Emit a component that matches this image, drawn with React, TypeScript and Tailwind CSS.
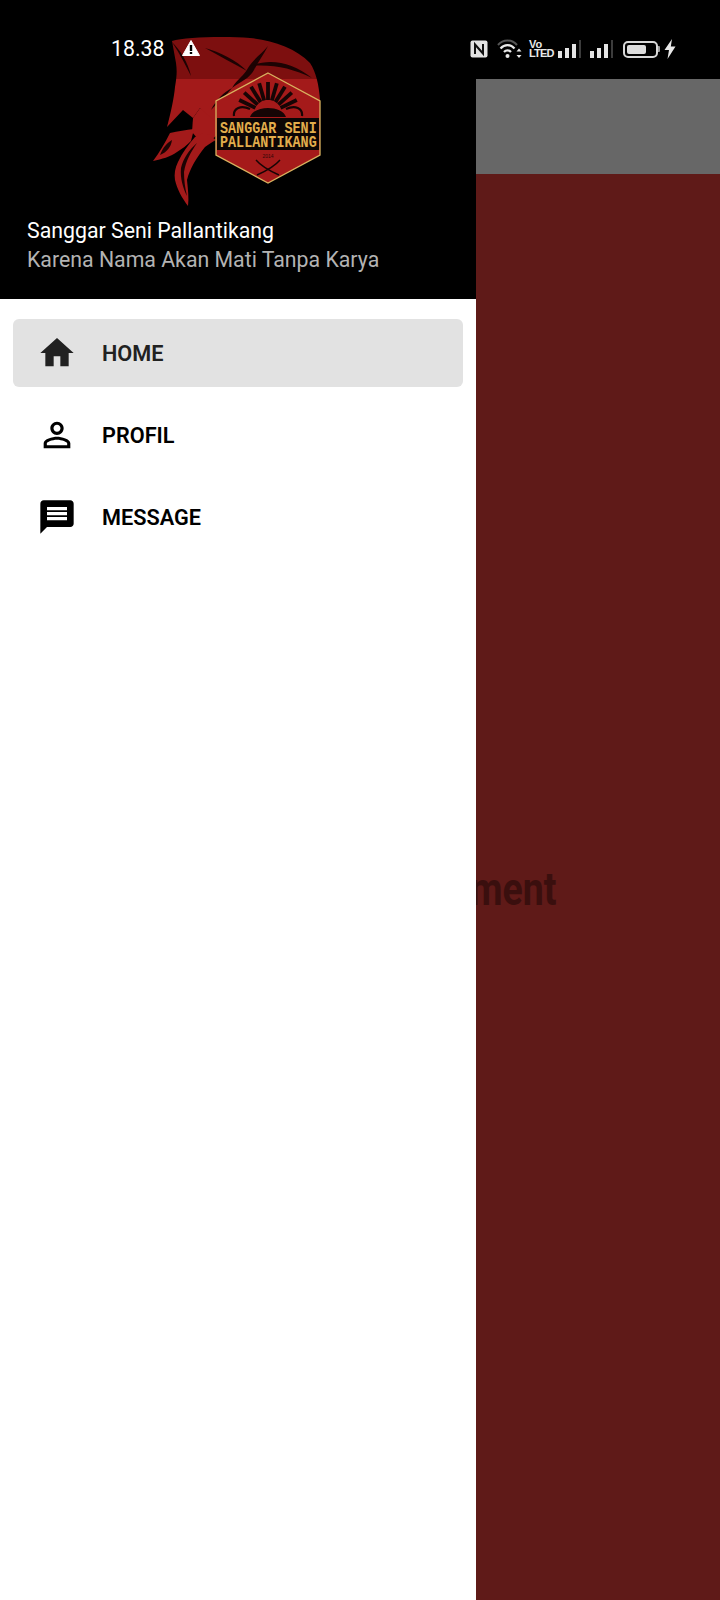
const MENU = [
  {
    label: "HOME",
    active: true,
    d: "M10 20v-6h4v6h5v-8h3L12 3 2 12h3v8z",
  },
  {
    label: "PROFIL",
    active: false,
    d: "M12 5.9c1.16 0 2.1.94 2.1 2.1s-.94 2.1-2.1 2.1S9.9 9.16 9.9 8s.94-2.1 2.1-2.1m0 9c2.97 0 6.1 1.46 6.1 2.1v1.1H5.9V17c0-.64 3.13-2.1 6.1-2.1M12 4C9.79 4 8 5.79 8 8s1.79 4 4 4 4-1.79 4-4-1.79-4-4-4zm0 9c-2.67 0-8 1.34-8 4v3h16v-3c0-2.66-5.33-4-8-4z",
  },
  {
    label: "MESSAGE",
    active: false,
    d: "M20 2H4c-1.1 0-1.99.9-1.99 2L2 22l4-4h14c1.1 0 2-.9 2-2V4c0-1.1-.9-2-2-2zm-2 12H6v-2h12v2zm0-3H6V9h12v2zm0-3H6V6h12v2z",
  },
]

const FAN_RAYS = [-64, -48, -32, -16, 0, 16, 32, 48, 64]

function Logo() {
  return (
    <svg width="180" height="180" viewBox="150 30 180 180" className="ml-[150px] block">
      <defs>
        <linearGradient id="cloth" x1="0" y1="30" x2="0" y2="210" gradientUnits="userSpaceOnUse">
          <stop offset="0.272" stopColor="#7d0f0f" />
          <stop offset="0.272" stopColor="#a31a1a" />
        </linearGradient>
      </defs>
      {/* bandana body */}
      <path
        d="M172 41 C185 37 225 36 250 38 C272 40 296 48 310 63 C316 72 319 85 320 100 L268 125 L216 132 L213 128 L200 108 L193 118 L183 110 L167 127 C171 112 174 98 175 87 C177 76 177 70 176 63 Z"
        fill="url(#cloth)"
      />
      {/* knot and the two tails */}
      <path d="M200 108 L216 122 L216 136 L204 146 L192 132 L193 118 Z" fill="#a31a1a" />
      <path d="M194 129 C186 130 178 131 170 133 C165 143 159 153 153 161 C162 159 170 157 177 152 C182 149 187 145 191 141 Z" fill="#a31a1a" />
      <path d="M195 137 C188 145 182 153 178 162 C175 168 174 174 175 180 C177 189 182 198 188 206 C189 198 188 190 187 180 C190 168 197 157 205 147 C209 144 212 142 216 140 L205 132 Z" fill="#a31a1a" />
      {/* folds */}
      <g fill="#1c0303">
        <path d="M172 42 C180 50 188 62 191 76 C186 66 180 54 172 42 Z" />
        <path d="M268 46 C262 54 254 58 248 68 C244 76 238 78 232 88 C240 82 250 78 254 70 C258 62 264 54 268 46 Z" />
        <path d="M205 48 C220 52 236 60 247 71 C234 64 220 56 205 48 Z" />
        <path d="M250 66 C270 58 292 62 312 78 C292 68 272 64 250 66 Z" />
        <path d="M232 88 C224 92 216 100 211 110 C218 102 226 96 232 88 Z" />
        <path d="M160 155 C163 147 167 143 172 140 C171 147 167 152 160 155 Z" />
        <path d="M181 168 C183 159 189 150 197 143 C191 152 186 160 184 172 C184 180 185 188 187 196 C183 188 180 178 181 168 Z" />
      </g>
      {/* badge */}
      <path d="M268 73 L320 101 L320 155 L268 183 L216 155 L216 101 Z" fill="#a51a1a" stroke="#d9b25f" strokeWidth="1.3" />
      <g stroke="#160505" strokeWidth="3.8">
        {FAN_RAYS.map((angle) => (
          <line key={angle} x1="268" y1="100" x2="268" y2="82" transform={`rotate(${angle} 268 114)`} />
        ))}
      </g>
      <path d="M250 117 C254 105 282 105 286 117 Z" fill="#160505" />
      <path d="M234 116 C233 108 241 105 250 109 M302 116 C303 108 295 105 286 109" fill="none" stroke="#160505" strokeWidth="2.2" />
      <rect x="217" y="118" width="102" height="32" fill="#0c0605" />
      <g fontFamily="'Liberation Mono', monospace" fontWeight="700" fontSize="16" fill="#e2ad4c">
        <text transform="translate(220 133) scale(0.84 1)">SANGGAR SENI</text>
        <text transform="translate(220 147) scale(0.84 1)">PALLANTIKANG</text>
      </g>
      <text x="268" y="158" textAnchor="middle" fontFamily="'Liberation Sans', sans-serif" fontSize="5" fill="#2c0808">2014</text>
      <g fill="none" stroke="#160505" strokeWidth="1.4">
        <path d="M256 160 C261 166 270 171 279 175" />
        <path d="M280 160 C275 166 266 171 257 175" />
      </g>
    </svg>
  )
}

function StatusIcons() {
  return (
    <div className="flex items-center">
      {/* nfc */}
      <svg width="18" height="18" viewBox="0 0 18 18" className="mr-[9px]">
        <rect x="0.5" y="0.5" width="17" height="17" rx="2" fill="#e4e4e4" />
        <path d="M5 14V4.5L13 13.5V4" fill="none" stroke="#111" strokeWidth="2" />
      </svg>
      {/* wifi */}
      <svg width="25" height="22" viewBox="0 0 25 22" className="mr-[7px]">
        <path d="M1 7 C6 1 15 1 20 7" fill="none" stroke="#555" strokeWidth="2" />
        <path d="M3.5 10.5 C7.5 6 13.5 6 17.5 10.5" fill="none" stroke="#e8e8e8" strokeWidth="2.2" />
        <path d="M7 14 C9 11.8 12 11.8 14 14" fill="none" stroke="#e8e8e8" strokeWidth="2.2" />
        <circle cx="10.5" cy="18" r="2" fill="#e8e8e8" />
        <path d="M22 10.5 L24.5 13.5 H19.5 Z M22 20 L24.5 17 H19.5 Z" fill="#e8e8e8" />
      </svg>
      {/* volte */}
      <div className="mr-[9px] flex w-[20px] flex-col font-['Liberation_Sans',sans-serif] text-[11px] leading-[9px] font-bold text-[#e8e8e8]">
        <span>Vo</span>
        <span className="tracking-[-0.8px]">LTED</span>
      </div>
      {/* sim bars */}
      <Signal className="mr-[9px]" />
      <Signal className="mr-[10px]" />
      {/* battery */}
      <div className="mr-[4px] flex items-center">
        <div className="flex h-[17px] w-[35px] items-center rounded-[5px] border-2 border-[#d8d8d8] p-[2px]">
          <div className="h-full w-[19px] rounded-[2px] bg-[#dcdcdc]" />
        </div>
        <div className="h-[6px] w-[2px] rounded-r-[1px] bg-[#9a9a9a]" />
      </div>
      <svg width="12" height="20" viewBox="0 0 12 20">
        <path d="M8 0 L0.5 11 H5 L3.5 20 L11.5 7.5 H6.8 Z" fill="#e8e8e8" />
      </svg>
    </div>
  )
}

function Signal({ className }: { className: string }) {
  return (
    <div className={`flex h-[18px] items-end gap-[3px] ${className}`}>
      <div className="h-[7px] w-[4px] bg-[#e4e4e4]" />
      <div className="h-[10px] w-[4px] bg-[#e4e4e4]" />
      <div className="h-[14px] w-[4px] bg-[#e4e4e4]" />
      <div className="h-[18px] w-[2px] bg-[#3c3c3c]" />
    </div>
  )
}

export default function App() {
  return (
    <div className="relative flex h-[1600px] w-[720px] flex-col overflow-hidden bg-[#5f1a18] font-['Roboto',sans-serif]">
      {/* page behind the drawer */}
      <div className="h-[79px] shrink-0 bg-black" />
      <div className="h-[95px] shrink-0 bg-[#676767]" />
      <div className="flex flex-1 items-center justify-center pt-[3px]">
        <h1 className="origin-center scale-x-[0.815] text-[46px] leading-none font-bold whitespace-nowrap text-[#3a0f0e]">
          This is Home Fragment
        </h1>
      </div>

      {/* drawer */}
      <div className="absolute top-0 left-0 flex h-full w-[476px] flex-col bg-white">
        <div className="h-[299px] shrink-0 bg-black pt-[30px]">
          <Logo />
          <div className="mt-[6px] pl-[27px] text-[21.3px] leading-[29px]">
            <p className="text-white">Sanggar Seni Pallantikang</p>
            <p className="text-[#b3b3b3]">Karena Nama Akan Mati Tanpa Karya</p>
          </div>
        </div>
        <nav className="flex flex-col gap-[14px] px-[13px] pt-[20px]">
          {MENU.map((item) => (
            <div
              key={item.label}
              className={`flex h-[68px] items-center gap-[25px] rounded-[6px] pl-[24px] ${
                item.active ? "bg-[#e2e2e2] text-[#212121]" : "text-black"
              }`}
            >
              <svg width="40" height="40" viewBox="0 0 24 24" fill="currentColor">
                <path d={item.d} />
              </svg>
              <span className="pt-[2px] text-[21.7px] font-semibold">{item.label}</span>
            </div>
          ))}
        </nav>
      </div>

      {/* status bar, on top of everything */}
      <div className="absolute top-0 left-0 flex h-[79px] w-full items-start justify-between pt-[38px] pr-[44px] pl-[111px]">
        <div className="flex items-center gap-[17px]">
          <span className="text-[21.3px] leading-[22px] text-white">18.38</span>
          <svg width="18" height="16" viewBox="0 0 18 16" className="mb-[2px]">
            <path d="M9 0.5 L17.5 15.5 H0.5 Z" fill="#fff" stroke="#fff" strokeLinejoin="round" />
            <rect x="7.8" y="5" width="2.4" height="6" fill="#000" />
            <rect x="7.8" y="12" width="2.4" height="2" fill="#000" />
          </svg>
        </div>
        <StatusIcons />
      </div>
    </div>
  )
}
